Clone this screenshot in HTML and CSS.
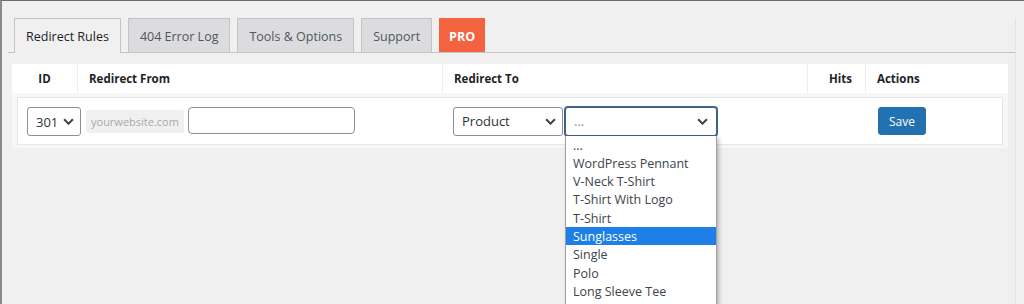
FILE: index.html
```html
<!DOCTYPE html>
<html>
<head>
<meta charset="utf-8">
<link rel="stylesheet" href="styles.css">
</head>
<body>
<div class="page">
  <nav class="tabs">
    <a class="tab active">Redirect Rules</a>
    <a class="tab">404 Error Log</a>
    <a class="tab">Tools &amp; Options</a>
    <a class="tab">Support</a>
    <a class="tab pro">PRO</a>
  </nav>
  <div class="panel">
    <div class="head">
      <div class="th th-id">ID</div>
      <div class="th">Redirect From</div>
      <div class="th">Redirect To</div>
      <div class="th th-hits">Hits</div>
      <div class="th">Actions</div>
    </div>
    <div class="row">
      <div class="cell cell-from">
        <div class="select sel-code"><span>301</span><svg class="chev" viewBox="0 0 10 6"><path d="M1 1l4 4 4-4"/></svg></div>
        <span class="domain">yourwebsite.com</span>
        <div class="input"></div>
      </div>
      <div class="cell cell-to">
        <div class="select sel-type"><span>Product</span><svg class="chev" viewBox="0 0 10 6"><path d="M1 1l4 4 4-4"/></svg></div>
        <div class="select sel-item focus"><span class="dots">...</span><svg class="chev" viewBox="0 0 10 6"><path d="M1 1l4 4 4-4"/></svg>
          <ul class="menu">
            <li>...</li>
            <li>WordPress Pennant</li>
            <li>V-Neck T-Shirt</li>
            <li>T-Shirt With Logo</li>
            <li>T-Shirt</li>
            <li class="hl">Sunglasses</li>
            <li>Single</li>
            <li>Polo</li>
            <li>Long Sleeve Tee</li>
          </ul>
        </div>
      </div>
      <div class="cell"></div>
      <div class="cell cell-act"><button class="save">Save</button></div>
    </div>
  </div>
</div>
</body>
</html>
```

FILE: styles.css
```css
html, body {
  margin: 0;
  padding: 0;
  height: 304px;
  overflow: hidden;
}
body {
  background: #f0f0f1;
  border-top: 1px solid #6b6b6b;
  border-left: 2px solid #8a8a8a;
  font-family: "Open Sans", "Noto Sans", sans-serif;
  color: #3c434a;
  box-sizing: border-box;
}
.page {
  height: 100%;
  margin-right: 8px;
  border-right: 1px solid #e2e2e3;
}
.tabs {
  display: flex;
  margin: 17px 0 0 6px;
  padding-left: 6px;
  border-bottom: 1px solid #c3c4c7;
  gap: 7px;
}
.tab {
  display: block;
  height: 33px;
  line-height: 35px;
  padding: 0 11px;
  font-size: 12.5px;
  border: 1px solid #c3c4c7;
  border-bottom: none;
  background: #dcdcde;
  color: #50575e;
}
.tab.active {
  background: #f0f0f1;
  color: #1d2327;
  margin-bottom: -1px;
  height: 34px;
}
.tab.pro {
  background: #f4633f;
  border-color: #f4633f;
  color: #fff;
  font-weight: 700;
  padding: 0 9px;
}
.panel {
  margin: 11px 7px 0 10px;
  background: #f7f7f7;
  padding-bottom: 3px;
}
.head {
  display: grid;
  grid-template-columns: 65px 364px 364px 57px 1fr;
  gap: 1px;
  background: #eeeeef;
  height: 28px;
}
.th {
  background: #fff;
  font-size: 11.5px;
  font-weight: 700;
  color: #1d2327;
  line-height: 29px;
  padding-left: 11px;
}
.th-id { text-align: center; padding-left: 0; }
.th-hits { text-align: center; padding-left: 8px; }
.row {
  margin: 5px 5px 0 5px;
  background: #fff;
  border: 1px solid #e6e6e7;
  height: 46px;
  display: grid;
  grid-template-columns: 425px 365px 58px 1fr;
  align-items: center;
}
.cell {
  display: flex;
  align-items: center;
  height: 100%;
}
.cell-from { padding-left: 9px; }
.cell-to { padding-left: 10px; gap: 2px; }
.cell-act { padding-left: 12px; }
.select {
  position: relative;
  box-sizing: border-box;
  height: 29px;
  border: 1px solid #8c8f94;
  border-radius: 3px;
  background: #fff;
  display: flex;
  align-items: center;
  justify-content: space-between;
  padding: 0 6px 0 8px;
  font-size: 13px;
  color: #2c3338;
}
.sel-code { width: 54px; margin-top: 1px; }
.sel-type { width: 110px; }
.sel-item { width: 152px; }
.select.focus {
  border-color: #3e6386;
  box-shadow: 0 0 0 1px #3e6386;
  border-radius: 3px;
}
.dots { color: #8c8f94; }
.chev {
  width: 11px;
  height: 7px;
  fill: none;
  stroke: #3c434a;
  stroke-width: 1.8;
}
.sel-item .chev { margin-right: 2px; }
.domain {
  margin-left: 5px;
  background: #f0f0f1;
  color: #a7aaad;
  font-size: 11px;
  height: 23px;
  line-height: 23px;
  padding: 0 5px;
  border-radius: 2px;
}
.input {
  margin-left: 4px;
  width: 167px;
  height: 27px;
  box-sizing: border-box;
  border: 1px solid #8c8f94;
  border-radius: 4px;
  background: #fff;
  margin-top: -2px;
}
.save {
  font-family: inherit;
  font-size: 12px;
  background: #2271b1;
  color: #fff;
  border: 1px solid #2271b1;
  border-radius: 3px;
  width: 48px;
  height: 28px;
  padding: 0;
}
.menu {
  position: absolute;
  top: 28px;
  left: -1px;
  width: 150px;
  margin: 0;
  padding: 0 0 20px 0;
  list-style: none;
  background: #fff;
  border: 1px solid #a0a0a0;
  border-top: none;
  box-shadow: 2px 2px 4px rgba(0,0,0,0.25);
  z-index: 5;
}
.menu li {
  height: 18.3px;
  line-height: 19px;
  padding-left: 7px;
  font-size: 12.5px;
  color: #3c434a;
  white-space: nowrap;
}
.menu li.hl {
  background: #1e7fe6;
  color: #fff;
}
```
